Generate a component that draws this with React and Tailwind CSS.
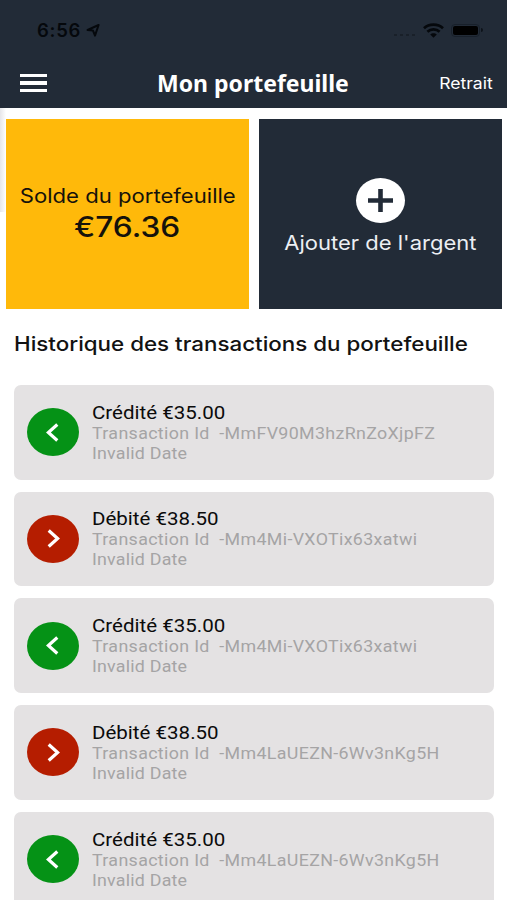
const transactions = [
    { type: "credit", amount: "€35.00", id: "-MmFV90M3hzRnZoXjpFZ" },
    { type: "debit", amount: "€38.50", id: "-Mm4Mi-VXOTix63xatwi" },
    { type: "credit", amount: "€35.00", id: "-Mm4Mi-VXOTix63xatwi" },
    { type: "debit", amount: "€38.50", id: "-Mm4LaUEZN-6Wv3nKg5H" },
    { type: "credit", amount: "€35.00", id: "-Mm4LaUEZN-6Wv3nKg5H" },
];

const StatusBar = () => (
    <div className="h-[58px] pt-[19px] pl-[37px] pr-[24px] flex justify-between text-[#05080c]">
        <div className="h-[23px] flex items-center gap-[5px]">
            <span className="text-[18.5px] leading-[23px] font-semibold tracking-[0.7px]">
                6:56
            </span>
            <svg width="14" height="13" viewBox="0 0 14 13" fill="none">
                <path
                    d="M12.6 1 L1.6 6 L7 6.6 L9 11.6 Z"
                    stroke="currentColor"
                    strokeWidth="2"
                    strokeLinejoin="round"
                />
            </svg>
        </div>
        <div className="h-[22px] flex items-center">
            <div className="flex gap-[3px] mt-[10px] mr-[8px] opacity-30">
                <span className="w-[3px] h-[2px] bg-[#05080c]" />
                <span className="w-[3px] h-[2px] bg-[#05080c]" />
                <span className="w-[3px] h-[2px] bg-[#05080c]" />
                <span className="w-[3px] h-[2px] bg-[#05080c]" />
            </div>
            <svg width="21" height="15" viewBox="0 0 21 15" fill="none">
                <path
                    d="M1 5.2 C6 0.4 15 0.4 20 5.2 M4.4 8.8 C7.8 5.6 13.2 5.6 16.6 8.8"
                    stroke="currentColor"
                    strokeWidth="2.7"
                />
                <path
                    d="M7.2 11.6 C9 9.8 12 9.8 13.8 11.6 L10.5 14.8 Z"
                    fill="currentColor"
                />
            </svg>
            <div className="ml-[7px] w-[29px] h-[13px] rounded-[4px] border border-[#18202a] p-px">
                <div className="h-full rounded-[2px] bg-black" />
            </div>
            <span className="ml-px w-[2px] h-[4px] rounded-r bg-[#0d131a]" />
        </div>
    </div>
);

const Header = () => (
    <header className="h-[108px] bg-[#222b37]">
        <StatusBar />
        <div className="h-[50px] pl-[20px] pr-[14px] flex items-center text-white">
            <div className="w-[27px] flex flex-col gap-[4px]">
                <span className="h-[3.5px] bg-white" />
                <span className="h-[3.5px] bg-white" />
                <span className="h-[3.5px] bg-white" />
            </div>
            <h1 className="ml-[110px] font-['Noto_Sans',sans-serif] text-[23px] leading-[30px] font-bold whitespace-nowrap">
                Mon portefeuille
            </h1>
            <span className="ml-auto origin-right scale-x-[1.1] text-[16px] leading-[20px]">
                Retrait
            </span>
        </div>
    </header>
);

const TransactionRow = ({ item }) => {
    const isCredit = item.type === "credit";

    return (
        <li className="h-[94.5px] shrink-0 rounded-[7px] bg-[#e4e2e3] pl-[13px] flex items-center font-[Roboto,sans-serif]">
            <div
                className={`w-[52px] h-[48px] rounded-[50%] flex items-center justify-center ${
                    isCredit ? "bg-[#059216] pr-px" : "bg-[#b51d00] pl-px"
                }`}
            >
                <svg width="13" height="19" viewBox="0 0 13 19" fill="none">
                    <path
                        d={
                            isCredit
                                ? "M11.3 1.5 L2.4 9.5 L11.3 17.5"
                                : "M1.7 1.5 L10.6 9.5 L1.7 17.5"
                        }
                        stroke="white"
                        strokeWidth="3.2"
                    />
                </svg>
            </div>
            <div className="mt-px ml-[13px] origin-left scale-x-[1.08] whitespace-pre">
                <p className="text-[19px] leading-[22px] text-[#0b0b0b]">
                    {isCredit ? "Crédité" : "Débité"} {item.amount}
                </p>
                <p className="text-[16.5px] leading-[20px] tracking-[0.32px] text-[#a5a4a5]">
                    {"Transaction Id  "}
                    {item.id}
                </p>
                <p className="text-[16.5px] leading-[20px] tracking-[0.2px] text-[#a5a4a5]">
                    Invalid Date
                </p>
            </div>
        </li>
    );
};

const App = () => {
    return (
        <div className="w-[507px] h-[900px] overflow-hidden bg-white font-[Inter,sans-serif]">
            <Header />
            <div className="flex">
                {/* Drawer shadow along the left edge */}
                <div className="w-[6px] h-[104px] bg-gradient-to-r from-[#e6e6ea] to-white" />
                <div className="pt-[10.5px] flex gap-[10px]">
                    <div className="w-[243px] h-[190.5px] bg-[#ffb90a] pt-px flex flex-col items-center justify-center whitespace-nowrap text-[#15120b]">
                        <p className="text-[20px] leading-[26px] scale-x-[1.105]">
                            Solde du portefeuille
                        </p>
                        <p className="text-[28px] leading-[36px] font-medium scale-x-[1.13]">
                            €76.36
                        </p>
                    </div>
                    <div className="w-[243px] h-[190.5px] bg-[#222b37] pt-[6px] flex flex-col items-center justify-center whitespace-nowrap text-[#eceff3]">
                        <div className="w-[49px] h-[45px] rounded-[50%] bg-white flex items-center justify-center">
                            <svg width="25" height="23" viewBox="0 0 25 23">
                                <path
                                    d="M12.5 0 V23 M0 11.5 H25"
                                    stroke="#222b37"
                                    strokeWidth="4.6"
                                />
                            </svg>
                        </div>
                        <p className="mt-[7px] text-[20px] leading-[26px] scale-x-[1.1]">
                            Ajouter de l'argent
                        </p>
                    </div>
                </div>
            </div>
            <h2 className="mt-[22px] ml-[14px] w-fit origin-left scale-x-[1.118] whitespace-nowrap text-[20px] leading-[26px] font-medium text-[#121212]">
                Historique des transactions du portefeuille
            </h2>
            <ul className="mt-[28px] ml-[14px] mr-[13px] flex flex-col gap-[12.2px]">
                {transactions.map((item, index) => (
                    <TransactionRow key={index} item={item} />
                ))}
            </ul>
        </div>
    );
};

export default App;
